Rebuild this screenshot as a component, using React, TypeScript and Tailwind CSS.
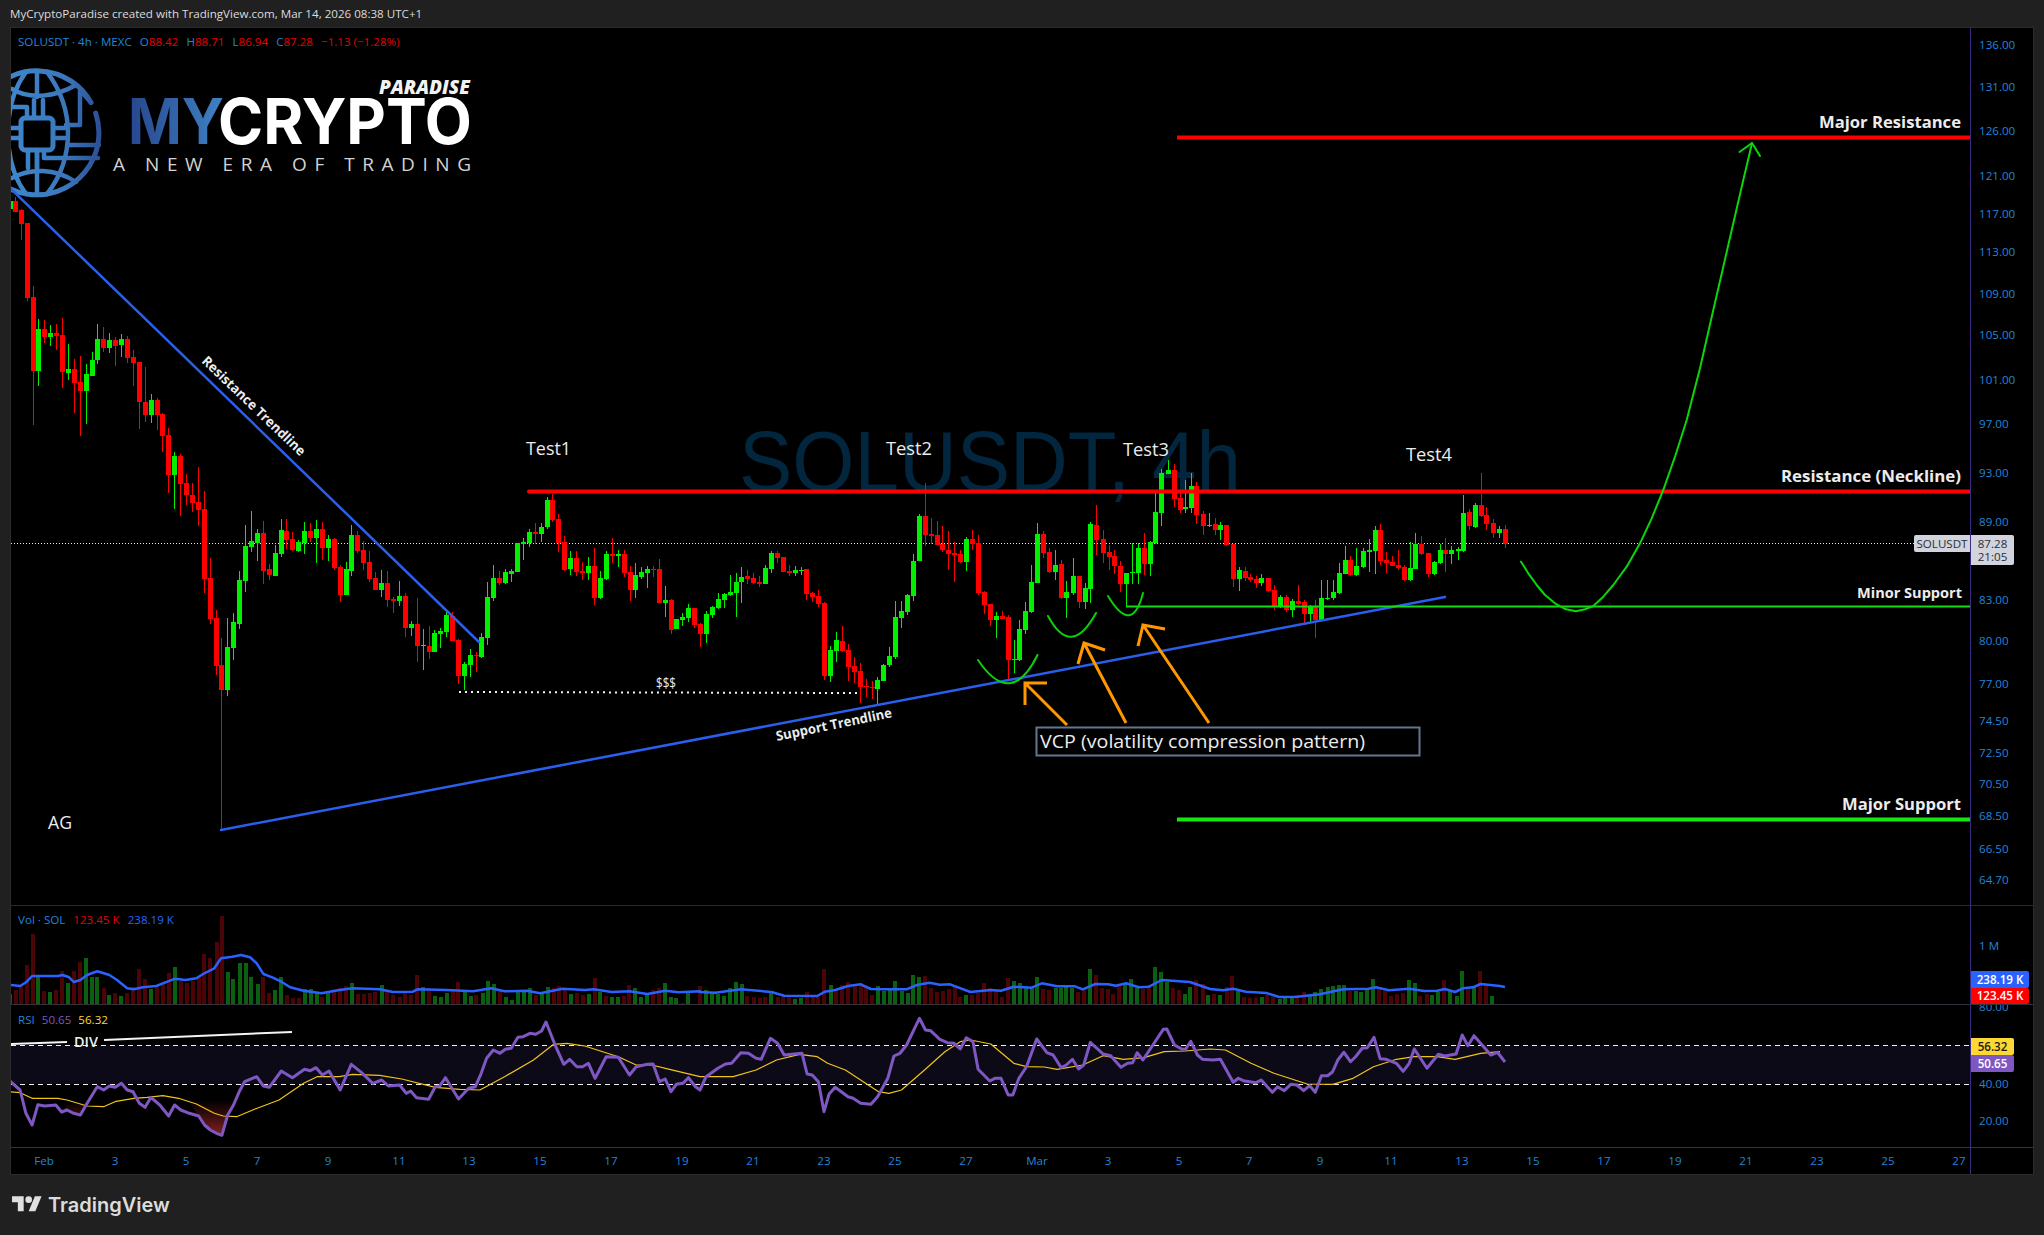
import React from "react";

const Z2 = "g33,63,87,63,87|r46,63,96,50,96|r64,90,131,88,180|r80,128,353,128,362|r98,351,572,318,735|g115,447,572,417,617|r133,447,470,420,490|g151,459,470,435,497|r169,460,467,432,510|r187,465,575,414,623|g205,567,578,492,600|r223,567,608,537,698|r241,606,632,528,767|g259,582,632,552,731|g275,540,587,516,587|g292,477,539,432,552|r310,477,503,441,516|g328,480,503,459,518|r346,480,497,472,557|g364,477,495,462,531|r382,477,533,468,549|r400,531,548,510,618|r418,546,665,546,747|r436,666,704,561,725|g454,660,704,642,728|r470,660,705,654,750|r487,702,767,700,815|r505,765,884,744,938|g523,828,884,816,987|r541,828,911,822,1007|r559,909,945,882,975|r577,945,968,909,996|r595,966,989,861,1037|r613,987,1196,933,1238|r631,1194,1316,1134,1331|r649,1314,1457,1290,1485|r664,1455,1529,1373,1950|g682,1401,1529,1314,1547|g700,1326,1403,1299,1439|g718,1200,1331,1173,1346|g736,1098,1202,1035,1235|g754,1083,1100,993,1115|g772,1059,1089,1047,1142|r790,1059,1172,1023,1211|r808,1167,1185,1152,1199|g826,1119,1187,1095,1187|g844,1050,1121,1017,1130|r859,1053,1079,1017,1106|r877,1077,1109,1056,1112|g895,1087,1112,1080,1115|g913,1053,1088,1026,1121|r931,1053,1073,1029,1085|g949,1047,1073,1020,1148|r967,1047,1103,1026,1139|g985,1077,1103,1065,1142|r1003,1077,1163,1074,1169|r1021,1161,1244,1155,1265|g1039,1167,1244,1146,1244|g1054,1065,1172,1035,1187|r1072,1065,1113,1053,1118|r1090,1110,1148,1083,1170|r1108,1146,1197,1113,1205|r1126,1194,1229,1176,1229|g1144,1209,1229,1170,1250|r1162,1209,1259,1173,1280|r1180,1257,1263,1250,1300|g1198,1248,1263,1203,1277|r1216,1248,1343,1240,1370|g1234,1331,1343,1323,1367|r1250,1331,1397,1254,1445|g1268,1395,1398,1347,1470|r1286,1398,1415,1338,1437|g1303,1358,1415,1350,1415|g1321,1353,1362,1344,1403|g1339,1305,1355,1290,1370|r1357,1308,1382,1296,1382|r1375,1380,1487,1377,1511|g1393,1452,1487,1446,1530|g1411,1425,1455,1407,1490|r1429,1425,1428,1416,1475|g1444,1371,1431,1359,1433|g1462,1251,1373,1206,1394|g1480,1194,1253,1155,1262|r1498,1194,1209,1173,1214|g1516,1176,1209,1167,1211|g1534,1173,1181,1167,1205";
const Z3 = "g52,370,455,370,455|g70,366,371,354,420|g88,336,369,327,380|r106,336,342,309,372|g124,321,342,310,366|g140,240,321,231,327|r157,240,300,222,306|r175,297,369,282,396|r193,366,450,348,453|g211,414,447,393,465|r229,414,456,393,468|r247,453,459,426,480|g265,438,459,411,480|r283,438,534,384,555|g301,474,534,453,537|g319,402,477,393,480|r335,402,408,354,430|g353,402,408,390,441|r371,402,459,390,471|r389,456,510,438,543|g406,465,510,429,534|g424,456,471,441,477|g442,447,459,438,504|r460,447,450,438,471|r478,447,549,417,549|g496,540,549,498,591|r514,540,630,537,642|g529,597,627,597,627|g547,591,600,579,618|g565,564,594,552,606|r583,564,615,564,624|r601,612,642,609,681|g619,582,642,573,669|g637,561,585,558,594|g655,537,564,519,567|g673,522,540,519,564|g691,516,525,465,528|g709,486,519,459,591|g724,471,486,441,549|r742,468,477,450,492|r760,474,489,459,492|r778,486,492,468,501|g796,444,492,435,492|g814,399,447,393,459|r832,399,414,393,429|r850,411,456,411,456|r868,453,459,435,468|g886,450,459,438,468|g904,450,453,441,465|r919,447,522,447,540|r937,519,531,516,546|r955,528,552,510,561|r973,549,768,546,780|g991,690,768,678,786|g1009,660,693,636,726|r1027,663,693,618,696|r1045,690,741,672,783|r1063,738,756,711,789|r1081,753,801,729,849|r1099,798,801,777,831|r1115,801,804,783,837|g1132,780,807,771,852|g1150,735,783,732,783|g1168,708,735,681,741|g1186,591,711,543,717|g1204,573,594,543,624|g1222,525,576,522,585|g1240,423,528,402,543|g1258,288,423,282,423|r1276,288,345,189,378|r1294,342,348,294,372|r1312,345,375,303,375|r1327,372,390,318,396|r1345,390,402,333,450|r1363,399,405,366,486|r1381,402,426,390,429|g1399,357,426,351,453|r1417,357,372,330,390|r1435,369,519,345,525|r1453,516,555,513,582|r1471,552,600,552,618|g1489,588,600,576,654|r1505,588,597,573,597|r1523,591,720,585,783|g1541,717,720,660,759|g1558,627,720,600,723";
const Z4 = "g210,543,600,516,612|g228,456,546,405,549|g244,312,459,279,459|r261,312,369,303,384|r278,366,426,354,429|g295,405,426,360,450|r312,402,504,390,507|g326,486,504,453,564|g343,438,489,384,495|r360,438,516,438,534|g377,474,516,459,537|g393,282,477,276,519|r410,285,330,225,375|r427,327,369,300,399|r444,366,381,345,420|r460,378,408,360,432|r477,408,462,393,486|g494,429,462,429,530|g509,426,429,339,462|g525,354,429,339,462|r542,354,402,309,435|g559,336,402,333,438|g575,246,339,183,342|g592,129,249,117,288|g609,120,132,90,132|r626,120,207,102,231|r643,204,240,186,249|g659,231,237,150,249|g675,168,234,129,249|r690,168,255,156,282|r707,252,288,243,315|g724,285,288,249,291|r741,282,300,264,315|g757,285,300,276,330|r774,285,345,285,348|r791,342,447,342,471|g808,420,447,411,483|r825,423,444,411,453|r841,441,450,432,456|r858,447,459,438,474|g872,444,459,432,468|r889,444,483,444,486|r906,480,531,465,540|g923,501,531,495,534|r940,501,540,495,546|g957,513,540,507,561|r973,513,522,465,525|r990,516,552,510,585|g1007,531,552,525,579|r1022,531,570,510,624|g1039,504,570,450,570|g1056,504,507,450,510|g1071,486,504,450,510|g1088,429,489,399,492|g1105,390,432,348,432|r1121,390,435,378,438|g1138,408,435,354,438|g1155,363,411,354,414|g1172,360,366,327,426|g1189,300,363,288,432|r1205,300,393,282,405|r1222,390,399,366,429|r1237,396,408,378,408|r1254,405,414,360,420|r1270,411,450,405,453|g1287,414,450,336,453|g1303,342,417,309,417|r1320,342,372,318,375|r1337,369,432,369,441|g1354,396,432,393,435|g1371,360,399,342,402|r1387,360,372,324,426|g1404,360,372,348,402|g1421,358,362,350,390|g1435,249,363,195,366|r1452,246,288,237,300|g1469,225,291,219,294|r1486,225,258,129,261|r1502,255,282,231,300|r1519,279,309,267,324|g1536,297,309,288,324|r1553,297,342,285,354";

const V6 = "g23,283|r35,270|r48,255|r60,195|r73,102|g86,230|r99,273|g112,275|r126,270|r140,213|g153,250|r166,213|r179,185|g192,175|g205,232|g218,232|r232,264|g245,286|r258,280|g272,288|r285,280|r298,262|r312,207|r325,237|g338,268|r352,260|r365,248|r378,220|g391,200|r405,242|r418,250|r432,244|r445,232|r458,162|r471,175|r485,125|r497,48|g510,215|g523,237|g537,190|g550,190|g563,232|g577,252|r590,230|r603,280|g617,270|g630,232|r643,285|r656,295|r670,295|g683,267|g696,268|g709,280|r722,290|g735,272|r748,275|r761,265|r775,258|g788,250|r801,282|r815,282|r828,278|r841,276|g855,255|r868,270|r881,285|r895,290|r908,278|r921,285|r934,225|g948,262|r961,265|g974,288|g988,292|g1001,280|r1014,270|r1027,245|g1041,275|g1054,288|r1067,285|g1081,278|g1094,243|g1107,252|r1120,270|g1134,292|g1147,300|g1160,275|g1174,275|g1187,265|r1200,285|g1213,280|g1227,262|r1240,265|r1253,258|r1266,265|g1279,283|r1293,278|r1306,285|g1319,282|r1332,235|g1345,275|r1358,288|g1372,290|g1385,290|r1398,288|r1410,255|g1423,265|g1436,290|g1449,283|r1463,270|r1476,265|g1489,250|g1502,290|g1515,295|r1529,310|g1542,280";
const V7 = "r0,258|g12,270|g23,280|g35,283|g47,288|g59,265|g70,246|g82,252|r93,288|r105,292|r117,293|r128,290|g140,280|r152,290|r163,292|r175,290|g187,297|g198,293|r209,276|r221,290|r232,291|r244,207|g256,255|r267,270|r279,255|r291,246|r303,258|r315,250|r326,262|r337,285|g348,258|g360,272|g372,270|g383,243|g395,272|g407,278|g418,225|g430,230|r441,228|r453,263|r465,276|r476,274|r488,266|r500,257|r510,290|g522,285|r533,285|r545,278|r557,249|r568,265|r580,272|r592,292|r604,234|g615,243|g627,250|g638,262|g650,260|g661,232|r673,268|r685,270|g697,265|g707,263|g718,262|g730,263|r741,275|r753,265|g764,207|r776,225|r787,263|r799,268|r810,283|r821,258|g833,248|g845,237|g856,265|r868,268|r880,255|g892,202|g904,216|g915,247|r927,263|r938,270|g950,282|g961,260|r973,240|r985,253|g996,285|r1008,282|g1020,285|r1032,262|r1043,228|g1055,272|r1066,292|r1078,293|r1090,294|g1101,292|r1112,285|r1124,292|g1136,298|g1147,293|g1160,293|r1171,285|r1183,276|g1195,285|g1206,275|g1218,268|g1230,262|g1241,258|g1252,255|g1263,255|r1274,272|g1285,272|g1296,275|g1308,268|g1320,237|r1331,260|r1342,272|r1354,288|r1366,281|r1378,278|g1389,240|g1401,250|r1412,288|r1424,283|g1435,285|g1447,275|r1459,240|g1470,270|g1483,288|g1494,212|r1506,260|g1518,262|r1529,213|r1541,258|g1553,288";

const P6 = (s: string) => s.split(" ").map((p) => { const [a, b] = p.split(",").map(Number); return `${(a / 2.24).toFixed(1)},${(900 + b / 3).toFixed(1)}`; });
const P7 = (s: string) => s.split(" ").map((p) => { const [a, b] = p.split(",").map(Number); return `${(700 + a / 1.96).toFixed(1)},${(900 + b / 3).toFixed(1)}`; });

const volMa = [...P6("22,255 45,258 60,245 72,228 130,228 140,225 155,232 165,246 180,240 195,225 218,214 245,225 262,240 285,265 300,268 320,262 350,258 375,245 392,236 415,240 440,235 455,222 480,205 495,175 520,170 540,165 560,172 575,190 590,222 610,232 630,245 650,262 680,272 720,280 760,270 790,265 850,268 880,276 925,275 935,268 1000,270 1060,274 1100,265 1130,274 1180,272 1210,280 1260,266 1310,270 1330,268 1370,276 1410,274 1450,282 1490,272 1520,277 1568,274"), ...P7("0,276 30,278 80,268 140,276 165,287 230,288 245,275 265,270 290,258 315,253 335,267 375,268 405,268 425,255 450,248 470,254 490,253 530,276 570,270 590,272 615,260 650,263 670,250 700,259 735,259 750,268 775,252 800,253 815,257 835,250 860,262 880,260 905,240 960,246 1000,267 1025,271 1045,266 1070,275 1110,279 1135,291 1170,290 1215,283 1260,268 1310,266 1325,262 1350,271 1390,266 1420,273 1445,272 1460,267 1480,276 1495,265 1515,262 1530,252 1568,258"), "1505,987"].join(" ");
const rsi = [...P6("22,543 45,570 58,640 72,675 85,614 100,618 125,615 138,636 150,630 165,640 180,645 195,610 218,560 232,570 245,558 258,562 272,550 285,570 298,575 312,610 325,622 338,592 358,615 378,648 391,615 405,630 420,638 445,648 458,675 471,690 485,700 497,706 510,645 523,615 537,572 548,545 575,530 590,558 603,562 630,513 655,533 682,508 695,512 708,503 722,525 737,513 762,570 787,493 810,518 835,550 855,540 870,558 895,555 910,580 920,573 933,593 960,598 975,560 985,558 998,533 1027,597 1050,565 1065,560 1078,520 1090,475 1105,450 1120,460 1132,448 1145,445 1160,412 1172,410 1187,400 1200,403 1213,393 1223,366 1245,440 1263,493 1276,478 1292,500 1305,500 1318,490 1333,535 1358,470 1385,472 1410,525 1425,500 1450,493 1463,492 1477,545 1490,537 1503,575 1515,553 1530,550 1542,533 1558,560"), ...P7("0,570 12,530 35,505 50,492 62,490 80,458 95,460 110,475 120,478 138,415 152,430 165,465 200,460 210,522 220,525 232,545 243,635 253,582 265,562 290,590 300,595 315,610 335,613 348,590 368,535 380,468 392,460 405,435 430,355 442,390 452,392 470,418 485,428 498,430 510,447 522,413 535,425 545,508 568,543 578,535 590,535 604,585 613,585 625,535 640,500 660,417 680,458 692,465 708,503 718,495 730,478 742,507 752,495 765,427 790,462 805,467 825,502 838,490 848,488 857,458 868,480 908,388 915,387 930,435 945,448 952,447 962,424 975,465 985,478 1005,480 1020,478 1045,547 1055,535 1065,542 1090,548 1100,540 1122,577 1132,560 1145,572 1158,553 1170,555 1183,572 1195,557 1206,577 1218,527 1230,527 1240,515 1250,480 1262,457 1275,485 1285,470 1298,445 1308,443 1321,412 1333,476 1345,478 1365,490 1378,514 1390,490 1400,447 1425,505 1447,463 1460,468 1482,462 1494,405 1505,437 1517,407 1550,465 1563,457"), "1505,1062"].join(" ");
const rsiMa = [...P6("22,575 45,578 72,595 130,595 150,600 195,618 232,620 260,604 300,595 330,592 365,587 400,595 440,612 480,640 500,648 530,650 570,628 625,600 680,550 710,530 760,530 790,523 850,526 900,537 975,562 1030,568 1075,570 1130,530 1195,480 1240,433 1270,430 1310,438 1385,470 1425,495 1460,495 1500,508 1568,530"), ...P7("65,530 110,510 150,480 195,463 230,470 250,490 285,510 320,545 350,575 370,580 395,570 440,510 480,455 510,425 530,420 570,432 615,490 640,500 675,501 700,508 750,495 790,467 830,478 870,473 910,455 950,453 1000,447 1030,450 1080,490 1125,520 1190,552 1240,553 1280,535 1320,500 1365,478 1400,470 1445,470 1480,478 1530,460 1568,455")].join(" ");
const fill1 = P6("445,648 458,675 471,690 485,700 497,706 510,645 523,615 527,600 420,600").join(" ");
const fill2 = P6("138,636 150,630 165,640 180,645 195,610 150,615").join(" ");
const bigCurve = "63,1325 85,1360 110,1395 135,1425 165,1450 195,1467 228,1474 255,1468 280,1458 310,1430 340,1395 380,1340 420,1270 455,1195 490,1110 525,1010 560,900 600,745 640,570 670,440 700,310 730,180 756,70".split(" ").map((p) => { const [a, b] = p.split(",").map(Number); return `${(1500 + a / 3).toFixed(1)},${(120 + b / 3).toFixed(1)}`; }).join(" ");

const candles = [
  ...Z2.split("|").map((s) => ({ s, ox: 0, sx: 3, oy: 180 })),
  ...Z3.split("|").map((s) => ({ s, ox: 500, sx: 3, oy: 420 })),
  ...Z4.split("|").map((s) => ({ s, ox: 950, sx: 2.8, oy: 430 })),
].map(({ s, ox, sx, oy }) => {
  const [x, t, b, wt, wb] = s.slice(1).split(",").map(Number);
  return {
    c: s[0] === "g" ? "#00f000" : "#ff0000",
    x: Math.round(ox + x / sx),
    t: Math.round(oy + t / 3),
    b: Math.round(oy + b / 3),
    wt: Math.round(oy + wt / 3),
    wb: Math.round(oy + wb / 3),
  };
});
const volBars = [
  ...V6.split("|").map((s) => ({ s, ox: 0, sx: 2.24 })),
  ...V7.split("|").map((s) => ({ s, ox: 700, sx: 1.96 })),
].map(({ s, ox, sx }) => {
  const [x, t] = s.slice(1).split(",").map(Number);
  return { c: s[0] === "g" ? "#0b5f10" : "#4b0507", x: Math.round(ox + x / sx), t: Math.round(900 + t / 3) };
});

const priceTicks: [string, number][] = [["136.00", 45], ["131.00", 87], ["126.00", 130.5], ["121.00", 175.5], ["117.00", 213.5], ["113.00", 252], ["109.00", 293.5], ["105.00", 335], ["101.00", 379.5], ["97.00", 424], ["93.00", 472.5], ["89.00", 521.5], ["83.00", 600], ["80.00", 641], ["77.00", 684], ["74.50", 721], ["72.50", 752.5], ["70.50", 783.5], ["68.50", 816], ["66.50", 849], ["64.70", 880]];
const rsiTicks: [string, number][] = [["80.00", 1007], ["40.00", 1083.5], ["20.00", 1121]];
const timeTicks: [string, number][] = [["Feb", 44], ["3", 115], ["5", 186], ["7", 257], ["9", 328], ["11", 399], ["13", 469], ["15", 540], ["17", 611], ["19", 682], ["21", 753], ["23", 824], ["25", 895], ["27", 966], ["Mar", 1037], ["3", 1108], ["5", 1179], ["7", 1249], ["9", 1320], ["11", 1391], ["13", 1462], ["15", 1533], ["17", 1604], ["19", 1675], ["21", 1746], ["23", 1817], ["25", 1888], ["27", 1959]];

const UI = '"Open Sans", "Liberation Sans", sans-serif';

function Label({ x, y, w, size = 14, bold = false, rotate, fill = "#ececec", children }: { x: number; y: number; w: number; size?: number; bold?: boolean; rotate?: [number, number, number]; fill?: string; children: React.ReactNode }) {
  return (
    <text x={x} y={y} fontFamily={UI} fontSize={size} fontWeight={bold ? 700 : 400} fill={fill} textLength={w} lengthAdjust="spacingAndGlyphs" transform={rotate ? `rotate(${rotate[0]} ${rotate[1]} ${rotate[2]})` : undefined}>
      {children}
    </text>
  );
}

function Logo() {
  return (
    <g>
      <defs>
        <linearGradient id="globe" gradientUnits="userSpaceOnUse" x1="10" y1="0" x2="100" y2="0">
          <stop offset="0" stopColor="#3f86ca" />
          <stop offset="0.6" stopColor="#3b78bd" />
          <stop offset="1" stopColor="#2c4f96" />
        </linearGradient>
        <linearGradient id="my" gradientUnits="userSpaceOnUse" x1="130" y1="0" x2="224" y2="0">
          <stop offset="0" stopColor="#27478f" />
          <stop offset="1" stopColor="#3f82c4" />
        </linearGradient>
      </defs>
      <g fill="none" stroke="url(#globe)" strokeWidth="4.5" strokeLinecap="round" strokeLinejoin="round">
        <path d="M91 102.5 A62 62 0 1 0 95.7 113.1" strokeWidth="5" />
        <path d="M37 71 V97 M37 150 V195" />
        <path d="M47 72 C62 92 68 112 68 133 C68 155 62 175 47 194" />
        <path d="M26 72 C14 88 8 110 8 133 C8 156 14 178 26 194" />
        <path d="M12 89 C30 100 55 97 76 85" />
        <path d="M12 178 C30 168 55 168 76 182" />
        <rect x="21" y="118" width="32" height="32" rx="4" strokeWidth="5" />
        <path d="M34 100 V118 M43 100 V118 M28 150 V168 M37 150 V168" />
        <path d="M53 128 H65 M53 138 H65 M8 128 H21 M8 138 H21" />
        <path d="M8 107 H27 V118" />
        <path d="M66 125 H80 V90 L91 102.5" />
        <path d="M44 150 V158 H98 M68 145 H99" />
      </g>
      <text x="128" y="144" fontFamily='Inter, "Liberation Sans", sans-serif' fontSize="63" fontWeight="700" fill="url(#my)" textLength="96" lengthAdjust="spacingAndGlyphs">MY</text>
      <text x="218" y="144" fontFamily='Inter, "Liberation Sans", sans-serif' fontSize="63" fontWeight="700" fill="#ffffff" textLength="254" lengthAdjust="spacingAndGlyphs">CRYPTO</text>
      <text x="379" y="93.5" fontFamily={UI} fontSize="19" fontWeight="800" fontStyle="italic" fill="#f2f2f2" textLength="91" lengthAdjust="spacingAndGlyphs">PARADISE</text>
      <text x="113" y="171" fontFamily={UI} fontSize="19" fill="#d2d2d2" textLength="358" lengthAdjust="spacing">A NEW ERA OF TRADING</text>
    </g>
  );
}

function MainChart() {
  return (
    <svg className="absolute inset-0 h-full w-full" viewBox="11 28 1959 877">
      <text x="739" y="491" fontFamily='"Liberation Sans", sans-serif' fontSize="86" fill="#03263f" textLength="502" lengthAdjust="spacingAndGlyphs">SOLUSDT, 4h</text>
      <Logo />
      <line x1="11" x2="1970" y1="543.5" y2="543.5" stroke="#e4e4e4" strokeWidth="1" strokeDasharray="1 2" />
      <g shapeRendering="crispEdges">
        {candles.map((k, i) => (
          <g key={i} fill={k.c}>
            <rect x={k.x} y={k.wt} width="1" height={Math.max(1, k.wb - k.wt)} />
            <rect x={k.x - 2} y={k.t} width="5" height={Math.max(1, k.b - k.t)} />
          </g>
        ))}
      </g>
      <g fill="none" strokeLinecap="round">
        <line x1="8" y1="186" x2="479" y2="642" stroke="#2a5fee" strokeWidth="2.5" />
        <line x1="221" y1="830" x2="1445" y2="597" stroke="#2a5fee" strokeWidth="2.5" />
        <line x1="529" x2="1970" y1="491.5" y2="491.5" stroke="#ff0000" strokeWidth="4" />
        <line x1="1177" x2="1970" y1="137.5" y2="137.5" stroke="#ff0000" strokeWidth="4" strokeLinecap="butt" />
        <line x1="1177" x2="1970" y1="819.5" y2="819.5" stroke="#14e614" strokeWidth="4" strokeLinecap="butt" />
        <line x1="1126" x2="1970" y1="606.5" y2="606.5" stroke="#14dc14" strokeWidth="2" strokeLinecap="butt" />
        <line x1="459" y1="692" x2="858" y2="693" stroke="#f2f2f2" strokeWidth="2" strokeDasharray="2 4" strokeLinecap="butt" />
        <polyline points={bigCurve} stroke="#0ad60a" strokeWidth="2" strokeLinejoin="round" />
        <path d="M1739.5 152 L1752 143 L1760 156" stroke="#0ad60a" strokeWidth="2" strokeLinejoin="round" />
        <g stroke="#0ad00a" strokeWidth="2">
          <path d="M978 660 Q1011 709 1037.5 655" />
          <path d="M1048 616 Q1071 659 1096 613" />
          <path d="M1108 596 Q1132 636 1143 593" />
        </g>
        <g stroke="#ff9800" strokeWidth="3">
          <path d="M1067 725 L1025 683 M1025 705 V683 H1047" strokeLinecap="butt" />
          <path d="M1126 723 L1084 643 M1078 664 L1084 643 L1105 650" strokeLinecap="butt" />
          <path d="M1209 723 L1143 625 M1138 646 L1143 625 L1165 629" strokeLinecap="butt" />
        </g>
      </g>
      <rect x="1036.5" y="727.5" width="383" height="28" fill="#000000" stroke="#64788c" strokeWidth="2" />
      <Label x={1040} y={748} w={325} size={19}>VCP (volatility compression pattern)</Label>
      <Label x={526} y={455} w={45} size={19}>Test1</Label>
      <Label x={886} y={455} w={46} size={19}>Test2</Label>
      <Label x={1123} y={455.5} w={46} size={19}>Test3</Label>
      <Label x={1406} y={461} w={46} size={19}>Test4</Label>
      <Label x={656} y={688} w={20} size={14}>$$$</Label>
      <Label x={48} y={829} w={24} size={18}>AG</Label>
      <Label x={1819} y={128} w={142} size={16.5} bold>Major Resistance</Label>
      <Label x={1781} y={482} w={180} size={16.5} bold>Resistance (Neckline)</Label>
      <Label x={1857} y={598} w={105} size={14} bold>Minor Support</Label>
      <Label x={1842} y={810} w={119} size={16} bold>Major Support</Label>
      <Label x={201} y={362} w={137} size={13.5} bold rotate={[43.7, 201, 362]}>Resistance Trendline</Label>
      <Label x={777} y={741} w={118} size={13.5} bold rotate={[-11.7, 777, 741]}>Support Trendline</Label>
    </svg>
  );
}

function Tick({ y, top, children }: { y: number; top: number; children: React.ReactNode }) {
  return (
    <span className="absolute left-[8px] -translate-y-1/2 text-[11.6px] leading-none text-[#2085dc]" style={{ top: y - top }}>
      {children}
    </span>
  );
}

export default function App() {
  return (
    <div className="flex h-[1235px] w-[2044px] flex-col overflow-hidden bg-[#202020]" style={{ fontFamily: UI }}>
      <div className="flex h-[27px] items-center pl-[10px] text-[11.6px] text-[#dcdcdc]">
        MyCryptoParadise created with TradingView.com, Mar 14, 2026 08:38 UTC+1
      </div>

      <div className="ml-[10px] flex h-[1148px] w-[2024px] flex-col border border-[#2b2b2b] bg-black">
        <div className="flex h-[877px]">
          <div className="relative flex-1 overflow-hidden">
            <MainChart />
            <div className="absolute left-[7px] top-[7px] flex text-[11.6px] leading-[14px] text-[#2085dc]">
              <span className="mr-[8px]">SOLUSDT · 4h · MEXC</span>
              <span className="mr-[8px]">O<span className="text-[#e60000]">88.42</span></span>
              <span className="mr-[8px]">H<span className="text-[#e60000]">88.71</span></span>
              <span className="mr-[8px]">L<span className="text-[#e60000]">86.94</span></span>
              <span className="mr-[8px]">C<span className="text-[#e60000]">87.28</span></span>
              <span className="text-[#e60000]">−1.13 (−1.28%)</span>
            </div>
            <div className="absolute right-0 top-[507px] flex h-[17px] w-[56px] items-center justify-center rounded-l-[2px] bg-[#d1d4dc] text-[11.6px] text-[#2a2e39]">
              SOLUSDT
            </div>
          </div>
          <div className="relative w-[63px] border-l border-[#3a2a80]">
            {priceTicks.map(([t, y]) => (
              <Tick key={t} y={y} top={28}>{t}</Tick>
            ))}
            <div className="absolute left-0 top-[507px] flex h-[30px] w-[43px] flex-col items-center justify-center rounded-r-[2px] bg-[#d1d4dc] text-[11.6px] leading-[13px] text-[#2a2e39]">
              <span>87.28</span>
              <span>21:05</span>
            </div>
          </div>
        </div>

        <div className="flex h-[99px] border-t border-[#2a2a34]">
          <div className="relative flex-1 overflow-hidden">
            <svg className="absolute inset-0 h-full w-full" viewBox="11 906 1959 98">
              <g shapeRendering="crispEdges">
                {volBars.map((b, i) => (
                  <rect key={i} x={b.x - 2} y={b.t} width="4" height={1004 - b.t} fill={b.c} />
                ))}
              </g>
              <polyline points={volMa} fill="none" stroke="#2962ff" strokeWidth="2.5" strokeLinejoin="round" />
            </svg>
            <div className="absolute left-[7px] top-[7px] flex gap-[8px] text-[11.6px] leading-[14px]">
              <span className="text-[#2085dc]">Vol · SOL</span>
              <span className="text-[#e60000]">123.45 K</span>
              <span className="text-[#2962ff]">238.19 K</span>
            </div>
          </div>
          <div className="relative w-[63px] border-l border-[#3a2a80]">
            <Tick y={946} top={906}>1 M</Tick>
            <div className="absolute left-0 top-[65px] flex h-[17px] w-[58px] items-center justify-center rounded-r-[2px] bg-[#2962ff] text-[11.6px] font-semibold text-white">238.19 K</div>
            <div className="absolute left-0 top-[82px] flex h-[16px] w-[58px] items-center justify-center rounded-r-[2px] bg-[#ff0000] text-[11.6px] font-semibold text-white">123.45 K</div>
          </div>
        </div>

        <div className="flex h-[143px] border-t border-[#33333c]">
          <div className="relative flex-1 overflow-hidden">
            <svg className="absolute inset-0 h-full w-full" viewBox="11 1005 1959 142">
              <defs>
                <linearGradient id="oversold" gradientUnits="userSpaceOnUse" x1="0" y1="1100" x2="0" y2="1136">
                  <stop offset="0" stopColor="#8a1f1f" stopOpacity="0" />
                  <stop offset="1" stopColor="#8a2424" stopOpacity="0.95" />
                </linearGradient>
              </defs>
              <rect x="11" y="1045" width="1959" height="39" fill="#0d0a18" />
              <line x1="11" x2="1970" y1="1045.5" y2="1045.5" stroke="#f0f0f0" strokeDasharray="5 4" />
              <line x1="11" x2="1970" y1="1084.5" y2="1084.5" stroke="#f0f0f0" strokeDasharray="5 4" />
              <polygon points={fill1} fill="url(#oversold)" />
              <polygon points={fill2} fill="url(#oversold)" />
              <polyline points={rsiMa} fill="none" stroke="#f0c419" strokeWidth="1.2" strokeLinejoin="round" />
              <polyline points={rsi} fill="none" stroke="#7e57c2" strokeWidth="3" strokeLinejoin="round" />
              <path d="M10 1044 L67 1042 M104 1040 L292 1032" stroke="#f4f4f4" strokeWidth="2" fill="none" />
              <text x="74" y="1047" fontFamily={UI} fontSize="14" fontWeight="600" fill="#f0f0f0" textLength="24" lengthAdjust="spacingAndGlyphs">DIV</text>
            </svg>
            <div className="absolute left-[7px] top-[8px] flex gap-[7px] text-[11.6px] leading-[14px]">
              <span className="text-[#2085dc]">RSI</span>
              <span className="text-[#7e57c2]">50.65</span>
              <span className="text-[#fdd835]">56.32</span>
            </div>
          </div>
          <div className="relative w-[63px] overflow-hidden border-l border-[#3a2a80]">
            {rsiTicks.map(([t, y]) => (
              <Tick key={t} y={y} top={1005}>{t}</Tick>
            ))}
            <div className="absolute left-0 top-[33px] flex h-[17px] w-[43px] items-center justify-center rounded-r-[2px] bg-[#fdd835] text-[11.6px] font-semibold text-[#1a1a1a]">56.32</div>
            <div className="absolute left-0 top-[50px] flex h-[17px] w-[43px] items-center justify-center rounded-r-[2px] bg-[#7e57c2] text-[11.6px] font-semibold text-white">50.65</div>
          </div>
        </div>

        <div className="flex h-[27px] border-t border-[#3a2a6a]">
          <div className="relative flex-1">
            {timeTicks.map(([t, x], i) => (
              <span key={i} className="absolute top-[6px] -translate-x-1/2 text-[11.6px] leading-[14px] text-[#2085dc]" style={{ left: x - 11 }}>
                {t}
              </span>
            ))}
          </div>
          <div className="w-[63px] border-l border-[#3a2a80]" />
        </div>
      </div>

      <div className="flex flex-1 items-center pl-[12px] pb-[1px]">
        <svg width="30" height="23.3" viewBox="0 0 36 28" className="mr-[6px]">
          <path d="M14 22H7V11H0V4h14v18z" fill="#e0e0e0" />
          <path d="M28 22h-8l7.5-18h8L28 22z" fill="#e0e0e0" />
          <circle cx="20" cy="8" r="4" fill="#e0e0e0" />
        </svg>
        <span className="text-[20px] font-semibold leading-none text-[#dcdcdc]" style={{ fontFamily: 'Inter, "Liberation Sans", sans-serif' }}>TradingView</span>
      </div>
    </div>
  );
}
